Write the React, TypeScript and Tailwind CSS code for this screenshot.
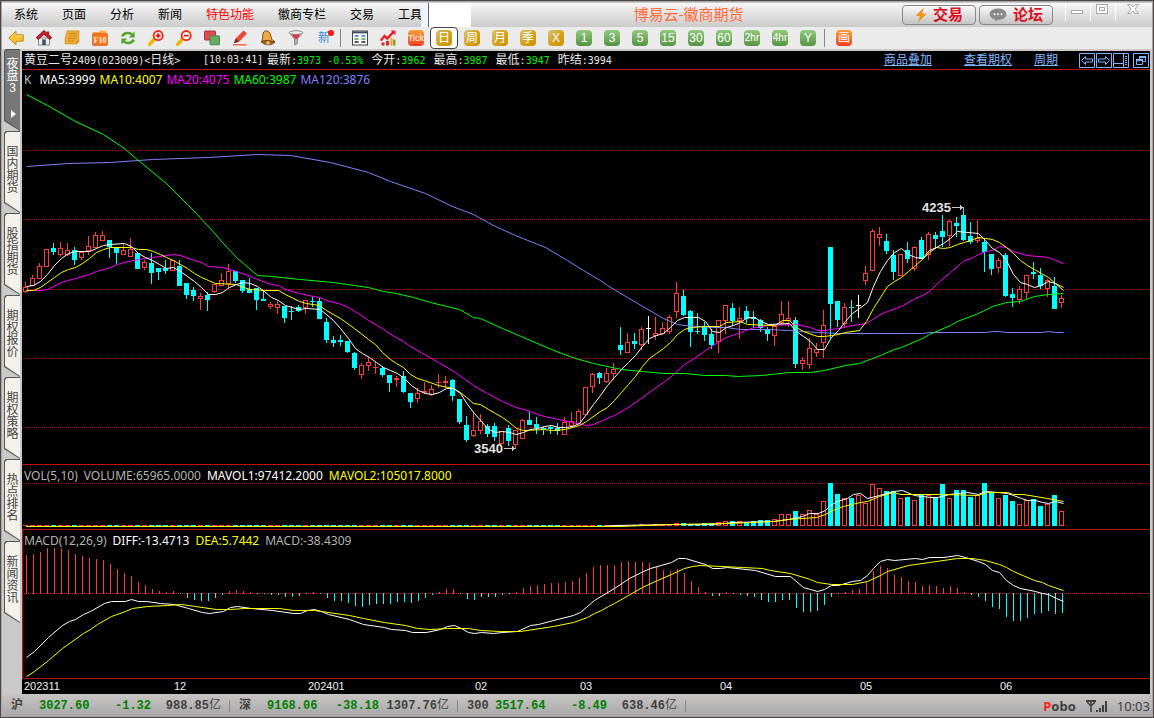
import React from "react";
import { clsx } from "clsx";

const CJK = "font-['Liberation_Sans','Noto_Sans_CJK_SC',sans-serif]";
const MONO = "font-['DejaVu_Sans_Mono','Noto_Sans_CJK_SC',monospace]";
const LABEL = "font-['Noto_Sans','Noto_Sans_CJK_SC',sans-serif]";

const RED = "#ff3c3c";
const CYAN = "#00ffff";

type Candle = [kind: "r" | "c" | "w", high: number, top: number, bottom: number, low: number];

// one bar every 7px, first one at x = 25
const STEP = 7;
const FIRST_X = 25;

const candles: Candle[] = [
  ["r", 282, 287, 292, 293], ["r", 275, 278, 286, 286], ["r", 263, 266, 279, 279], ["r", 249, 249, 267, 267],
  ["c", 243, 248, 252, 255], ["r", 242, 248, 255, 257], ["r", 243, 250, 255, 256], ["c", 247, 250, 260, 265],
  ["r", 252, 252, 258, 260], ["r", 236, 246, 251, 255], ["r", 232, 235, 248, 248], ["r", 231, 235, 241, 241],
  ["c", 240, 240, 247, 258], ["c", 248, 248, 253, 264], ["r", 243, 250, 255, 255], ["r", 238, 249, 257, 257],
  ["c", 253, 253, 269, 269], ["r", 260, 262, 268, 270], ["c", 253, 263, 273, 284], ["c", 268, 268, 272, 280],
  ["c", 260, 268, 271, 274], ["r", 260, 260, 271, 271], ["c", 260, 266, 286, 286], ["c", 283, 283, 295, 299],
  ["c", 287, 290, 296, 301], ["r", 293, 296, 299, 310], ["c", 292, 295, 300, 311], ["r", 284, 284, 292, 293],
  ["r", 273, 280, 286, 286], ["r", 264, 271, 284, 288], ["c", 271, 271, 281, 283], ["c", 280, 280, 291, 293],
  ["c", 278, 289, 293, 293], ["c", 288, 288, 300, 310], ["c", 290, 299, 301, 301], ["r", 302, 304, 307, 309],
  ["r", 301, 304, 308, 314], ["c", 306, 306, 318, 323], ["c", 306, 311, 312, 320], ["c", 305, 307, 311, 312],
  ["r", 300, 300, 308, 314], ["c", 297, 301, 302, 307], ["c", 298, 301, 319, 319], ["c", 318, 322, 340, 343],
  ["c", 336, 340, 343, 347], ["c", 335, 340, 342, 346], ["c", 341, 341, 352, 353], ["c", 352, 353, 368, 370],
  ["r", 363, 365, 375, 379], ["r", 357, 362, 366, 371], ["r", 362, 367, 368, 374], ["c", 366, 368, 375, 377],
  ["c", 375, 375, 383, 392], ["r", 376, 378, 380, 387], ["c", 371, 376, 392, 393], ["c", 393, 393, 402, 408],
  ["r", 388, 393, 399, 403], ["r", 382, 391, 393, 394], ["r", 385, 389, 395, 396], ["r", 374, 382, 383, 388],
  ["r", 376, 381, 383, 388], ["c", 379, 380, 396, 401], ["c", 399, 399, 422, 424], ["c", 416, 425, 440, 442],
  ["r", 412, 430, 436, 437], ["r", 414, 421, 431, 434], ["c", 424, 426, 434, 437], ["c", 423, 426, 437, 441],
  ["r", 431, 431, 444, 444], ["c", 425, 428, 441, 446], ["r", 430, 430, 445, 449], ["r", 419, 420, 439, 439],
  ["c", 411, 420, 425, 425], ["c", 417, 424, 428, 434], ["c", 427, 428, 430, 435], ["c", 425, 427, 429, 434],
  ["c", 423, 428, 431, 435], ["r", 417, 422, 435, 435], ["r", 412, 421, 426, 427], ["r", 409, 411, 424, 424],
  ["r", 387, 387, 415, 415], ["r", 373, 374, 387, 393], ["c", 372, 373, 378, 384], ["r", 368, 373, 382, 383],
  ["r", 363, 369, 374, 380], ["c", 327, 345, 350, 355], ["r", 333, 342, 353, 353], ["c", 333, 341, 344, 349],
  ["r", 327, 329, 345, 350], ["w", 316, 328, 329, 344], ["r", 317, 333, 336, 340], ["r", 322, 328, 334, 335],
  ["r", 315, 317, 332, 334], ["r", 282, 293, 312, 318], ["c", 290, 296, 315, 316], ["c", 310, 311, 332, 347],
  ["c", 313, 331, 332, 334], ["c", 322, 326, 335, 341], ["c", 329, 334, 345, 349], ["r", 320, 320, 342, 353],
  ["r", 305, 305, 321, 334], ["c", 303, 308, 321, 326], ["r", 307, 318, 321, 339], ["c", 306, 311, 319, 323],
  ["c", 311, 317, 319, 328], ["c", 319, 320, 328, 332], ["c", 327, 329, 334, 341], ["r", 325, 326, 336, 346],
  ["r", 301, 314, 323, 325], ["r", 301, 318, 321, 327], ["c", 317, 320, 364, 368], ["r", 357, 360, 364, 370],
  ["r", 338, 348, 365, 369], ["r", 343, 349, 353, 357], ["r", 310, 325, 343, 358], ["c", 247, 247, 304, 338],
  ["c", 301, 301, 320, 327], ["r", 303, 307, 324, 328], ["c", 300, 307, 308, 322], ["w", 295, 305, 306, 318],
  ["r", 266, 273, 281, 285], ["r", 229, 231, 271, 271], ["r", 227, 234, 238, 246], ["c", 234, 241, 251, 254],
  ["c", 250, 255, 272, 280], ["r", 254, 254, 276, 276], ["c", 242, 250, 259, 263], ["r", 246, 247, 269, 271],
  ["c", 237, 240, 259, 259], ["r", 232, 234, 255, 260], ["c", 232, 235, 239, 249], ["c", 215, 231, 237, 247],
  ["r", 220, 221, 236, 246], ["c", 217, 223, 226, 237], ["c", 207, 215, 240, 241], ["c", 222, 236, 242, 244],
  ["r", 220, 238, 241, 243], ["c", 239, 242, 252, 272], ["c", 254, 254, 269, 275], ["r", 258, 260, 268, 273],
  ["c", 253, 255, 296, 297], ["c", 288, 294, 298, 307], ["r", 286, 289, 300, 304], ["r", 275, 275, 293, 299],
  ["c", 262, 272, 274, 279], ["c", 268, 275, 286, 289], ["r", 279, 280, 289, 297], ["c", 277, 286, 309, 309],
  ["r", 295, 298, 303, 308],
];

// bar tops from the 88th candle on, everything before is a one pixel dash
const VOLUME_FROM = 88;
const volumes = [
  524, 525, 524, 525, 524, 523, 523, 524, 524, 523, 523, 522, 521, 521, 521, 522, 521, 520, 520, 519,
  514, 514, 511, 514, 510, 514, 501, 481, 494, 498, 498, 495, 503, 484, 488, 491, 491, 498, 497, 500,
  494, 495, 497, 484, 498, 490, 490, 497, 495, 482, 492, 498, 495, 501, 504, 500, 499, 506, 504, 495, 511,
];

const macd = [
  38, 39, 41, 45, 45, 45, 43, 39, 37, 35, 34, 33, 29, 24, 20, 17, 11, 8, 4, 2, 1, 2, -1, -5, -7, -8, -8, -5, -2,
  2, 3, 2, 1, -1, -1, -2, -2, -4, -4, -3, -1, 1, -1, -5, -8, -8, -10, -13, -14, -12, -11, -11, -11, -9, -9, -10,
  -8, -5, -2, 1, 4, 4, -1, -6, -7, -4, -4, -4, -2, -1, 1, 5, 7, 8, 9, 10, 10, 11, 12, 15, 20, 26, 28, 28, 28, 31,
  32, 31, 31, 30, 26, 23, 22, 24, 20, 12, 6, 1, -3, -3, 1, -1, -2, -3, -4, -7, -9, -9, -7, -7, -15, -19, -19,
  -18, -12, -4, -1, 1, 3, 4, 11, 22, 27, 25, 18, 16, 12, 11, 7, 8, 7, 5, 7, 5, 1, -2, -4, -8, -14, -16, -24,
  -28, -28, -25, -21, -20, -18, -21, -20,
];

const priceLines = [
  {
    color: "#8080ff",
    points:
      "26,166 68,163 110,162 152,159 208,157 257,154 290,155 330,162 368,172 390,181 425,193 452,206 473,214 493,225 515,235 545,247 567,260 583,270 600,280 607,285 627,297 663,318 677,324 684,325 712,327 726,327 740,329 768,329 789,330 817,332 840,333 873,333 905,333 922,333 929,332 985,332 992,331 999,331 1006,332 1041,332 1048,331 1055,332 1063,332",
  },
  {
    color: "#00ff00",
    points:
      "26,94 47,105 75,121 103,134 124,148 138,160 166,183 187,204 193,210 209,227 222,242 236,257 243,263 257,275 271,276 300,279 333,282 354,285 368,287 383,291 396,293 413,297 430,302 459,309 473,317 480,318 502,328 516,334 551,349 572,357 593,363 621,369 642,371 663,373 684,373 705,375 726,375 737,376 761,375 789,372 810,372 824,370 845,365 859,363 880,355 894,349 901,347 922,338 929,334 950,325 957,321 978,313 992,306 1006,302 1020,301 1034,296 1048,294 1063,293",
  },
  {
    color: "#ff00ff",
    points:
      "26,290 40,290 47,289 61,282 75,278 89,274 96,271 110,267 117,264 124,262 138,259 152,257 159,256 173,254 180,255 194,260 201,262 208,266 222,267 236,271 250,276 257,279 271,284 278,285 285,289 299,293 313,296 319,297 326,300 341,304 348,307 361,315 368,320 382,328 389,333 403,341 410,346 424,354 438,362 452,370 459,375 473,385 487,393 502,401 516,407 530,411 537,414 544,416 558,419 572,422 586,425 593,424 602,420 614,415 628,407 642,397 656,387 670,377 684,364 691,360 705,350 719,341 726,337 740,332 754,327 768,325 796,324 810,327 817,330 824,330 838,328 852,325 866,323 880,314 887,311 901,306 915,298 922,295 929,291 936,284 950,272 964,260 971,258 978,254 985,251 992,250 999,246 1006,247 1013,251 1027,255 1048,257 1055,260 1063,263",
  },
  {
    color: "#ffff00",
    points:
      "26,290 33,290 40,287 47,282 54,277 61,272 68,269 75,267 82,263 89,258 96,252 103,249 110,247 131,247 138,249 146,249 153,251 160,254 166,257 173,260 180,264 187,268 194,273 201,277 208,280 215,283 236,284 243,287 250,289 264,290 278,290 285,294 299,301 306,303 319,305 326,310 333,314 340,318 354,328 368,339 375,344 382,352 390,359 396,363 403,367 410,374 417,378 424,380 438,385 453,388 460,392 466,397 473,403 480,404 488,409 495,413 502,417 509,422 516,428 523,430 544,429 551,430 565,429 579,425 586,421 600,411 607,407 614,400 621,392 628,384 635,376 642,366 649,358 656,353 663,348 670,342 677,334 684,329 691,327 705,326 719,326 726,322 740,321 747,324 775,325 782,320 789,320 796,327 803,331 817,336 824,336 831,335 838,334 845,332 859,330 866,321 873,308 880,297 887,286 894,281 901,277 908,271 915,265 922,259 929,252 936,247 943,248 950,247 957,244 964,242 978,237 992,239 999,242 1006,247 1013,253 1020,260 1027,265 1034,269 1041,273 1048,277 1055,283 1063,287",
  },
  {
    color: "#ffffff",
    points:
      "26,286 33,285 40,281 47,274 54,265 61,258 68,253 75,251 89,251 96,248 103,245 110,244 124,243 131,246 138,253 145,257 152,260 159,264 166,268 173,267 180,271 187,276 194,281 201,287 208,294 215,294 222,292 229,287 236,284 243,282 250,283 257,286 264,291 271,297 278,300 285,305 292,307 299,309 306,308 320,309 333,320 340,328 348,338 355,348 362,353 369,357 376,362 383,367 390,370 397,373 404,378 411,385 418,390 425,393 432,394 439,392 446,388 453,388 460,393 467,404 474,413 481,421 488,429 495,432 502,431 509,432 516,434 523,432 530,429 537,428 544,426 551,425 558,427 565,427 572,426 579,423 586,414 593,404 600,395 607,385 614,377 621,369 628,362 635,355 642,346 649,338 656,335 663,333 670,327 677,320 684,317 698,317 705,321 712,331 719,332 726,327 733,325 740,322 747,317 754,317 761,321 768,324 789,323 796,331 803,336 810,341 817,349 824,349 831,337 838,330 845,321 852,313 859,308 867,302 873,286 880,271 887,260 894,252 901,248 908,254 915,257 922,258 929,250 936,247 943,243 950,238 957,231 978,233 985,240 992,248 999,252 1006,260 1013,274 1020,282 1027,284 1034,287 1041,285 1048,281 1055,283 1063,290",
  },
];

const volumeLines = [
  {
    color: "#ffffff",
    points:
      "26,526 600,526 613,525 673,524 713,524 733,522 773,521 788,519 802,516 809,513 818,513 825,510 830,505 837,501 847,498 853,494 860,493 867,498 879,495 893,491 902,490 914,495 930,497 937,497 949,494 967,492 978,494 985,491 998,492 1007,493 1013,495 1021,498 1027,500 1035,500 1042,502 1048,503 1055,501 1063,503",
  },
  {
    color: "#ffff00",
    points:
      "26,526 620,526 670,524 727,523 773,521 788,519 816,517 825,514 830,511 843,506 860,502 867,501 879,496 893,492 900,494 943,494 977,495 987,492 1007,492 1013,494 1023,494 1047,498 1063,501",
  },
];

const macdLines = [
  {
    color: "#ffffff",
    points:
      "26,657 34,651 48,637 62,625 69,621 75,619 83,614 90,611 104,603 111,601 125,601 131,599 138,601 146,601 160,603 174,604 188,608 202,612 209,613 223,611 230,607 237,606 251,608 272,610 293,613 300,613 307,610 314,609 321,611 328,614 349,619 363,624 384,627 391,629 405,630 412,632 426,632 440,629 447,626 454,625 461,628 468,632 474,633 481,632 493,633 502,632 517,631 530,625 538,624 553,620 573,615 580,612 594,600 614,588 629,578 641,572 650,568 671,562 678,558 685,558 705,564 712,568 720,568 727,567 755,570 775,576 790,576 803,587 810,589 817,591 824,589 831,585 838,585 852,581 860,580 867,575 873,568 880,561 887,559 894,560 915,558 922,559 929,557 943,557 957,555 965,557 978,561 985,564 992,570 999,572 1006,580 1013,585 1020,588 1035,591 1042,593 1048,594 1056,598 1063,601",
  },
  {
    color: "#ffff00",
    points:
      "26,676 34,671 48,660 62,648 83,633 90,629 97,624 111,616 125,611 132,608 147,606 167,605 181,604 195,606 216,609 230,609 244,608 279,608 293,610 314,610 349,615 363,618 384,622 405,625 417,628 430,629 447,628 468,628 480,630 500,631 520,631 553,626 573,622 587,617 594,613 601,610 608,606 614,603 628,595 642,587 657,580 671,574 684,568 692,566 700,565 743,567 762,568 770,570 790,573 810,579 817,582 831,584 852,584 867,581 880,575 887,571 908,565 929,562 957,558 972,558 985,560 999,564 1006,567 1013,571 1034,580 1042,582 1048,585 1063,590",
  },
];

const months = [
  { x: 24, text: "202311" },
  { x: 174, text: "12" },
  { x: 308, text: "202401" },
  { x: 475, text: "02" },
  { x: 580, text: "03" },
  { x: 720, text: "04" },
  { x: 860, text: "05" },
  { x: 1000, text: "06" },
];

const Lines = ({ lines }: { lines: { color: string; points: string }[] }) => (
  <g transform="translate(0.5 0.5)" shapeRendering="auto">
    {lines.map((line) => (
      <polyline key={line.color} points={line.points} fill="none" stroke={line.color} />
    ))}
  </g>
);

const Grid = ({ y, color = "#a80000" }: { y: number; color?: string }) => (
  <line
    x1={22}
    x2="110%"
    y1={y + 0.5}
    y2={y + 0.5}
    stroke={color}
    strokeDasharray="1 1"
    shapeRendering="geometricPrecision"
  />
);

const PriceChart = () => (
  <svg className="block h-[374px] w-full" shapeRendering="crispEdges">
    <g transform="translate(-22 -90)">
      {[150, 219, 289, 358, 427].map((y) => (
        <Grid key={y} y={y} />
      ))}
      {candles.map(([kind, high, top, bottom, low], i) => {
        const x = FIRST_X + i * STEP;
        const color = kind === "r" ? RED : kind === "c" ? CYAN : "#ffffff";
        const hollow = kind === "r" && bottom - top > 2;
        return (
          <g key={i}>
            <rect x={x} y={high} width={1} height={low - high} fill={color} />
            {hollow ? (
              <rect x={x - 1.5} y={top + 0.5} width={4} height={bottom - top - 1} fill="#000" stroke={color} />
            ) : (
              <rect x={x - 2} y={top} width={5} height={bottom - top} fill={color} />
            )}
          </g>
        );
      })}
      <Lines lines={priceLines} />
      <g fill="#e4e4e4" className="font-['Liberation_Sans',sans-serif] text-[13px] font-bold">
        <text x={922} y={212}>4235</text>
        <text x={474} y={453}>3540</text>
      </g>
      <g fill="none" stroke="#c8c8c8">
        <path d="M952 207.5h12M960.5 205v5M961.5 206v3" />
        <path d="M504 448.5h12M512.5 446v5M513.5 447v3" />
      </g>
    </g>
  </svg>
);

const VolumeChart = () => (
  <svg className="block h-[46px] w-full" shapeRendering="crispEdges">
    <g transform="translate(-22 -483)">
      <Grid y={483} />
      {candles.map(([kind], i) => {
        const x = FIRST_X + i * STEP;
        const top = i < VOLUME_FROM ? 525 : volumes[i - VOLUME_FROM];
        if (kind === "c" || top > 523) {
          return <rect key={i} x={x - 2} y={top} width={5} height={526 - top} fill={kind === "c" ? CYAN : RED} />;
        }
        return (
          <rect key={i} x={x - 1.5} y={top + 0.5} width={4} height={525 - top} fill="#000" stroke={RED} />
        );
      })}
      <Lines lines={volumeLines} />
    </g>
  </svg>
);

const MacdChart = () => (
  <svg className="block h-[130px] w-full" shapeRendering="crispEdges">
    <g transform="translate(-23 -548)">
      <Grid y={593} color="#d81818" />
      {macd.map((value, i) => (
        <rect
          key={i}
          x={FIRST_X + 1 + i * STEP}
          y={value > 0 ? 593 - value : 593}
          width={1}
          height={Math.abs(value) + (value > 0 ? 1 : 0)}
          fill={value > 0 ? RED : CYAN}
        />
      ))}
      <Lines lines={macdLines} />
    </g>
  </svg>
);

const Indicator = ({ items, className }: { items: [string, string][]; className?: string }) => (
  <div className={clsx("flex items-center text-xs whitespace-nowrap", LABEL, className)}>
    {items.map(([text, color]) => (
      <span key={text} className={color}>
        {text}
      </span>
    ))}
  </div>
);

const Svg = ({ children }: { children: React.ReactNode }) => (
  <svg className="block size-4" viewBox="0 0 16 16">
    {children}
  </svg>
);

const Magnifier = ({ plus }: { plus: boolean }) => (
  <Svg>
    <path d="M1.5 14.5 6 9.5" stroke="#f5b400" strokeWidth="3.4" strokeLinecap="round" />
    <circle cx="10.2" cy="5.6" r="4.6" fill="#fff3ee" stroke="#e8301c" strokeWidth="1.8" />
    <path d={plus ? "M7.8 5.6h4.8M10.2 3.2V8" : "M7.8 5.6h4.8"} stroke="#e01010" strokeWidth="1.6" />
  </Svg>
);

const iconTools: { label: string; icon: React.ReactNode }[] = [
  {
    label: "后退",
    icon: (
      <Svg>
        <path d="M.8 8 8 1.2v3.6h7.2v6.4H8v3.6Z" fill="#fbc02a" stroke="#b98a1c" />
        <path d="M3 7.6 7.4 3.6M8 6h6" stroke="#ffe48a" />
      </Svg>
    ),
  },
  {
    label: "首页",
    icon: (
      <Svg>
        <path d="M2.5 8h11v7h-11z" fill="#e9eef2" stroke="#7c8790" />
        <path d="M11 1.5h2.2V5H11z" fill="#b9232b" />
        <path d="M8 .8 15.4 7.6l-1.6 1.6L8 4 2.2 9.2.6 7.6Z" fill="#d12732" stroke="#a31a24" strokeWidth="1.2" />
        <path d="M6.2 9.4h3.6V15H6.2z" fill="#3f5160" />
      </Svg>
    ),
  },
  {
    label: "公告",
    icon: (
      <Svg>
        <path d="M3 .8h12v10L12.5 14H1V9Z" fill="#f0ac35" stroke="#d18e20" strokeWidth=".6" />
        <path d="M12 15.2 13 11l2.6-.4Z" fill="#c98510" />
        <path d="M5 3.5h8M5 6h8M4 8.500h8M4 11h6" stroke="#c07c12" strokeWidth=".8" />
      </Svg>
    ),
  },
  {
    label: "F10资料",
    icon: (
      <Svg>
        <path d="M.8 2h6l1.4-1.4h6.2V4H.8z" fill="#ffb648" />
        <rect x=".4" y="3.4" width="15.2" height="12" rx="1.2" fill="#f47420" stroke="#d9480c" strokeWidth=".6" />
        <text x="8" y="12.6" textAnchor="middle" fill="#fff4d8" className="font-['Liberation_Serif',serif] text-[8px] font-bold">
          F10
        </text>
      </Svg>
    ),
  },
  {
    label: "刷新",
    icon: (
      <Svg>
        <path d="M2.2 6.4C4 2.6 9.5 2 12 4.4" fill="none" stroke="#4fa52c" strokeWidth="2.6" />
        <path d="M14.6 1.6v6H8.8Z" fill="#4fa52c" />
        <path d="M13.8 9.6C12 13.4 6.5 14 4 11.6" fill="none" stroke="#4fa52c" strokeWidth="2.6" />
        <path d="M1.4 14.4v-6h5.8Z" fill="#4fa52c" />
      </Svg>
    ),
  },
  { label: "放大", icon: <Magnifier plus /> },
  { label: "缩小", icon: <Magnifier plus={false} /> },
  {
    label: "叠加",
    icon: (
      <Svg>
        <rect x=".5" y="1" width="11" height="9" rx="1" fill="#dd4a4f" stroke="#a83238" />
        <rect x="6" y="5.8" width="9.5" height="9" rx="1" fill="#68aa68" stroke="#4a854c" />
      </Svg>
    ),
  },
  {
    label: "画线",
    icon: (
      <Svg>
        <path d="m2 13 2-4.6L11.6.8l3 2.8L7 11.4Z" fill="#f2492f" stroke="#c5301c" strokeWidth=".5" />
        <path d="m2 13 2-4.6 3 3Z" fill="#5a3a22" />
        <path d="M1 14.8h13.5" stroke="#ef5b4b" strokeWidth="1.4" />
      </Svg>
    ),
  },
  {
    label: "预警",
    icon: (
      <Svg>
        <path d="M4.6 1.2C7.500 0 10.600 2.600 11 6.600c.3 2.400 1.200 3.400 4 5.400l-13.600 0C3.600 8.600 1.800 2.800 4.600 1.200Z" fill="#f0a840" stroke="#7c4415" />
        <path d="M1 11.5c4-1.600 9-1.400 14 .6-3 3.600-10 4-14-.6Z" fill="#a85e1c" stroke="#5e300b" strokeWidth=".7" />
        <circle cx="8" cy="13" r="1.7" fill="#f7cf6a" />
      </Svg>
    ),
  },
  {
    label: "筛选",
    icon: (
      <Svg>
        <path d="M1.5 2.5 6.6 9v6l2.8-1.6V9l5.1-6.5Z" fill="#b4b9bd" stroke="#6d7378" strokeWidth=".8" />
        <ellipse cx="8" cy="2.6" rx="6.8" ry="1.8" fill="#eef0f1" stroke="#6d7378" strokeWidth=".8" />
        <path d="M3.6 4.8h8.800L8 9.600Z" fill="#ec2f3a" />
      </Svg>
    ),
  },
  {
    label: "新品种",
    icon: (
      <span className="relative block text-xs leading-4 text-[#3c8cdc]">
        新
        <i className="absolute top-0 left-2.5 size-1.5 rounded-full bg-[#ff1010]" />
      </span>
    ),
  },
];

const chartTools: { label: string; icon: React.ReactNode }[] = [
  {
    label: "报价表",
    icon: (
      <Svg>
        <rect x=".5" y="1" width="15" height="14" fill="#fff" stroke="#444" />
        <path d="M1 2.4h14" stroke="#40536b" strokeWidth="2" />
        <path d="M2.6 6h4M9.4 6h4" stroke="#3d79d8" strokeWidth="1.3" />
        <path d="M2.6 9h4M9.4 9h4" stroke="#3c9c4a" strokeWidth="1.3" />
        <path d="M2.6 12h4M9.4 12h4" stroke="#222" strokeWidth="1.3" />
      </Svg>
    ),
  },
  {
    label: "分时图",
    icon: (
      <Svg>
        <path d="M.8 10.600 4.600 6l2.600 2.600L13.500 2" fill="none" stroke="#ec1c24" strokeWidth="2.4" />
        <path d="M10.600.6h4.800V5.400Z" fill="#ec1c24" />
        <path d="M1.500 12.500h3v3h-3z" fill="#d42c2c" />
        <path d="M6 11h3v4.500H6z" fill="#d42c2c" />
        <path d="M10.500 8h2v7.500h-2z" fill="#f2a41c" />
        <path d="M13 9.500h2.500v6H13z" fill="#8f9b30" />
      </Svg>
    ),
  },
];

const CHIP = "flex size-4 items-center justify-center rounded-sm leading-4 whitespace-nowrap text-white";
const ORANGE_CHIP = "bg-linear-to-b from-[#ff9d3a] to-[#f03a20]";
const GOLD_CHIP = "bg-linear-to-br from-[#d8c264] via-[#d4a41c] to-[#cc9200]";
const GREEN_CHIP = "bg-linear-to-b from-[#93c97c] to-[#559445]";

const periods = [
  { text: "Tick", tone: ORANGE_CHIP, size: "font-['Liberation_Sans_Narrow','Liberation_Sans',sans-serif] text-[9px]" },
  { text: "日", tone: GOLD_CHIP, size: "text-xs", active: true },
  { text: "周", tone: GOLD_CHIP, size: "text-xs" },
  { text: "月", tone: GOLD_CHIP, size: "text-xs" },
  { text: "季", tone: GOLD_CHIP, size: "text-xs" },
  { text: "X", tone: GOLD_CHIP, size: "text-xs" },
  { text: "1", tone: GREEN_CHIP, size: "text-xs" },
  { text: "3", tone: GREEN_CHIP, size: "text-xs" },
  { text: "5", tone: GREEN_CHIP, size: "text-xs" },
  { text: "15", tone: GREEN_CHIP, size: "text-xs" },
  { text: "30", tone: GREEN_CHIP, size: "text-xs" },
  { text: "60", tone: GREEN_CHIP, size: "text-xs" },
  { text: "2hr", tone: GREEN_CHIP, size: "text-[10px]" },
  { text: "4hr", tone: GREEN_CHIP, size: "text-[10px]" },
  { text: "Y", tone: GREEN_CHIP, size: "text-xs" },
];

const ToolButton = ({ label, active, children }: { label: string; active?: boolean; children: React.ReactNode }) => (
  <button
    type="button"
    aria-label={label}
    className={clsx(
      "flex h-[22px] w-7 shrink-0 items-center justify-center",
      active && "rounded-sm border border-[#444] bg-white",
    )}
  >
    {children}
  </button>
);

const Separator = () => (
  <div className="flex w-2 shrink-0 justify-start pl-0.5">
    <div className="h-[18px] w-px bg-[#888]" />
  </div>
);

const Toolbar = () => (
  <div className="flex h-[22px] items-center bg-[#ebebeb]">
    {iconTools.map((tool) => (
      <ToolButton key={tool.label} label={tool.label}>
        {tool.icon}
      </ToolButton>
    ))}
    <Separator />
    {chartTools.map((tool) => (
      <ToolButton key={tool.label} label={tool.label}>
        {tool.icon}
      </ToolButton>
    ))}
    {periods.map((p) => (
      <ToolButton key={p.text} label={p.text} active={p.active}>
        <span className={clsx(CHIP, p.tone, p.size)}>{p.text}</span>
      </ToolButton>
    ))}
    <Separator />
    <ToolButton label="画面">
      <span className={clsx(CHIP, ORANGE_CHIP, "text-xs")}>画</span>
    </ToolButton>
  </div>
);

const menus = ["系统", "页面", "分析", "新闻", "特色功能", "徽商专栏", "交易", "工具"];

const TITLE_BUTTON =
  "flex h-5 w-[74px] items-center justify-center gap-1.5 rounded border border-[#888] bg-linear-to-b from-[#fafafa] to-[#c4c4c4] text-[15px] leading-4 font-bold text-[#d8101c]";

const TitleBar = () => (
  <header className="flex h-6 items-center bg-linear-to-b from-[#f6f6f6] to-[#cbcbcb]">
    <nav className="flex w-[419px] shrink-0 gap-6 overflow-hidden pl-3 text-xs leading-6 whitespace-nowrap">
      {menus.map((menu) => (
        <button key={menu} type="button" className={clsx("shrink-0", menu === "特色功能" ? "text-[#ff0000]" : "text-black")}>
          {menu}
        </button>
      ))}
    </nav>
    <div className="h-full w-[50px] shrink-0 border-l-[7px] border-[#f0f4fa]">
      <div className="h-full border-l border-[#666] bg-white" />
    </div>
    <h1 className="flex-1 pl-1 text-center text-[15px] leading-6 text-[#ff6a35]">博易云-徽商期货</h1>
    <div className="flex shrink-0 items-center gap-[3px]">
      <button type="button" className={TITLE_BUTTON}>
        <svg className="h-4 w-3" viewBox="0 0 12 16">
          <path d="M9 .5.8 8.6l4 .6L3 15.500l8.400-8.600-4.400-.6Z" fill="#f0901c" />
        </svg>
        交易
      </button>
      <button type="button" className={TITLE_BUTTON}>
        <svg className="h-[14px] w-[18px]" viewBox="0 0 18 14">
          <path d="M9 .6c5 0 8.4 2.4 8.4 5.6S14 11.8 9.6 11.8L6 13.6l.4-2.2C3 10.8.6 8.8.6 6.2.6 3 4 .6 9 .6Z" fill="#8a8a8a" />
          <circle cx="5.5" cy="6.2" r="1" fill="#fff" />
          <circle cx="9" cy="6.2" r="1" fill="#fff" />
          <circle cx="12.5" cy="6.2" r="1" fill="#fff" />
        </svg>
        论坛
      </button>
    </div>
    <div className="ml-3 flex h-[18px] shrink-0 items-start self-start text-[#a8a8a8]">
      <button type="button" aria-label="最小化" className="h-full w-[25px] border-l border-white pl-1">
        <svg className="block h-[18px] w-4" viewBox="0 0 16 18">
          <rect x="1.5" y="7.5" width="11" height="3" fill="#fff" stroke="currentColor" />
        </svg>
      </button>
      <button type="button" aria-label="最大化" className="h-full w-[25px] border-l border-white pl-1">
        <svg className="block h-[18px] w-4" viewBox="0 0 16 18">
          <rect x="1.5" y="1.5" width="11" height="9" fill="#fff" stroke="currentColor" />
          <rect x="4.5" y="4.5" width="5" height="3" fill="none" stroke="currentColor" />
        </svg>
      </button>
      <button type="button" aria-label="关闭" className="h-full w-[37px] border-l border-white pl-[11px]">
        <svg className="block h-[18px] w-4" viewBox="0 0 16 18">
          <path d="M.5 1.5H4L6 4l2-2.5h3.5L8 6l3.5 4.5H8L6 8l-2 2.5H.5L4 6Z" fill="#fff" stroke="currentColor" />
        </svg>
      </button>
    </div>
  </header>
);

const tabs = ["夜盘3", "国内期货", "股指期货", "期权报价", "期权策略", "热点排名", "新闻资讯"];
const TAB_SHAPE = "[clip-path:polygon(0_2px,2px_0,100%_0,100%_100%,0_calc(100%-10px))]";

const SideTabs = () => (
  <aside className="flex w-[18px] shrink-0 flex-col bg-[#c9c9c9] pl-0.5">
    {tabs.map((tab, i) => (
      <button
        key={tab}
        type="button"
        className={clsx("block h-[82px] w-4 bg-[#555] py-px pl-px text-xs leading-3", TAB_SHAPE)}
      >
        <span
          className={clsx(
            "flex h-full flex-col items-center",
            TAB_SHAPE,
            i === 0 ? "justify-start gap-4 bg-[#777] pt-2 text-white" : "bg-[#f2f2ea] pt-3.5 text-[#444]",
          )}
        >
          <span className="w-3">{tab}</span>
          {i === 0 && (
            <svg className="h-2 w-1.5" viewBox="0 0 6 8">
              <path d="M1 0v8l5-4Z" fill="#fff" />
            </svg>
          )}
        </span>
      </button>
    ))}
  </aside>
);

const quotes = [
  { label: "最新:", value: "3973", color: "text-[#00f000]", extra: "-0.53%" },
  { label: "今开:", value: "3962", color: "text-[#00f000]" },
  { label: "最高:", value: "3987", color: "text-[#00f000]" },
  { label: "最低:", value: "3947", color: "text-[#00f000]" },
  { label: "昨结:", value: "3994", color: "text-[#e8e8e8]" },
];

const headerIcons = [
  { label: "向左", d: "M2.5 7.5l4-4V6h7v3h-7v2.5Z" },
  { label: "向右", d: "M13.5 7.5l-4-4V6h-7v3h7v2.5Z" },
  { label: "侧栏", d: "M0 10.5h10M10.5 1v13M12 3.5h2M12 5.5h2M12 7.5h2M12 9.5h2M12 11.5h2" },
];

const QuoteHeader = () => (
  <div className="flex h-[19px] items-center border-b border-[#c01008] pl-0.5 text-xs leading-[18px] whitespace-nowrap text-[#e8e8e8]">
    <h2 className="w-[179px]">
      黄豆二号<span className={clsx("text-[10px]", MONO)}>2409(023009)&lt;</span>日线
      <span className={clsx("text-[10px]", MONO)}>&gt;</span>
    </h2>
    <span className={clsx("w-16 text-[10px]", MONO)}>[10:03:41]</span>
    <div className="flex gap-2">
      {quotes.map((q) => (
        <span key={q.label}>
          {q.label.slice(0, 2)}
          <span className={clsx("text-[10px]", MONO)}>
            :<span className={q.color}>{q.value}</span>
            {q.extra && <span className={q.color}> {q.extra}</span>}
          </span>
        </span>
      ))}
    </div>
    <div className="ml-auto flex items-center text-[#80b8ff]">
      <a href="#overlay" className="mr-8 underline">商品叠加</a>
      <a href="#options" className="mr-[22px] underline">查看期权</a>
      <a href="#period" className="mr-[21px] underline">周期</a>
      <div className="flex gap-px">
        {headerIcons.map((icon) => (
          <button key={icon.label} type="button" aria-label={icon.label}>
            <svg className="block h-[15px] w-4" viewBox="0 0 16 15" fill="none" stroke="currentColor">
              <path d="M.5.5h15v14H.5Z" />
              <path d={icon.d} />
            </svg>
          </button>
        ))}
      </div>
      <button type="button" aria-label="还原" className="mr-px ml-1">
        <svg className="block h-[15px] w-4" viewBox="0 0 16 15" fill="none" stroke="currentColor">
          <path d="M.5.5h15v14H.5ZM6.5 6V3.5h6v5H10" />
          <path d="M6 4h7M3 7h7" strokeWidth="2" />
          <path d="M3.5 6.5h6v5h-6Z" />
        </svg>
      </button>
    </div>
  </div>
);

const indices = [
  { name: "沪", price: "3027.60", change: "-1.32", amount: "988.85" },
  { name: "深", price: "9168.06", change: "-38.18", amount: "1307.76" },
  { name: "300", price: "3517.64", change: "-8.49", amount: "638.46" },
];

const StatusBar = () => (
  <footer className="flex h-[22px] items-center bg-linear-to-b from-[#c8c4c4] to-[#a8a8a8] pt-0.5 pr-0.5 pl-[9px] font-['Liberation_Mono','Noto_Sans_CJK_SC',monospace] text-xs leading-5 font-bold text-[#404040]">
    {indices.map((row) => (
      <div key={row.name} className="flex w-[228px] shrink-0 items-center whitespace-nowrap">
        <span className="w-7">{row.name}</span>
        <span className="w-[51px] text-[#008000]">{row.price}</span>
        <span className="w-[61px] text-right text-[#008000]">{row.change}</span>
        <span className="w-[70px] text-right">
          {row.amount}
          <span className="font-normal">亿</span>
        </span>
        <span className="ml-2 h-3 w-px bg-[#888]" />
      </div>
    ))}
    <div className={clsx("ml-auto flex items-center gap-2.5 text-[13px]", LABEL)}>
      <span>
        <span className="text-[#ff2020]">P</span>obo
      </span>
      <svg className="h-[13px] w-[21px]" viewBox="0 0 21 13" fill="none" stroke="#404040">
        <path d="M0 1h10" strokeWidth="2" />
        <path d="m1 2 4 4 4-4M5 2v10" strokeWidth="1.5" />
        <path d="M11 12v-2M14 12V8M17 12V5M20 12V1" strokeWidth="2" />
      </svg>
      <span className="font-normal">10:03</span>
    </div>
  </footer>
);

export default function App() {
  return (
    <div className={clsx("min-h-screen border border-[#4c4848] bg-[#c9c9c9]", CJK)}>
      <div className="flex min-h-full flex-col border border-[#a8a4a4] pt-px">
        <TitleBar />
        <Toolbar />
        <div className="flex">
          <SideTabs />
          <main className="min-w-0 flex-1 border-x-2 border-t-2 border-[#cfc8c8] bg-black">
            <QuoteHeader />
            <section className="border-b border-[#c01008]">
              <Indicator
                className="h-5 gap-1 pl-0.5"
                items={[
                  ["K", "mr-1 text-[#c0c0c0]"],
                  ["MA5:3999", "text-white"],
                  ["MA10:4007", "text-[#ffff00]"],
                  ["MA20:4075", "text-[#ff00ff]"],
                  ["MA60:3987", "text-[#00ff00]"],
                  ["MA120:3876", "text-[#8080ff]"],
                ]}
              />
              <PriceChart />
            </section>
            <section className="border-b border-[#c01008]">
              <Indicator
                className="h-[18px] gap-1.5 pt-1 pl-0.5"
                items={[
                  ["VOL(5,10)", "text-[#b4b4b4]"],
                  ["VOLUME:65965.0000", "text-[#b4b4b4]"],
                  ["MAVOL1:97412.2000", "text-white"],
                  ["MAVOL2:105017.8000", "text-[#ffff00]"],
                ]}
              />
              <VolumeChart />
            </section>
            <section className="border-b border-l border-[#c01008]">
              <Indicator
                className="h-[18px] gap-1.5 pt-1 pl-px"
                items={[
                  ["MACD(12,26,9)", "text-[#b4b4b4]"],
                  ["DIFF:-13.4713", "text-white"],
                  ["DEA:5.7442", "text-[#ffff00]"],
                  ["MACD:-38.4309", "text-[#b4b4b4]"],
                ]}
              />
              <MacdChart />
            </section>
            <svg className="block h-[15px] w-full font-['Liberation_Sans',sans-serif] text-[11px]" fill="#f0f0f0">
              {months.map((m) => (
                <text key={m.x} x={m.x - 22} y={11}>
                  {m.text}
                </text>
              ))}
            </svg>
          </main>
        </div>
        <StatusBar />
      </div>
    </div>
  );
}
